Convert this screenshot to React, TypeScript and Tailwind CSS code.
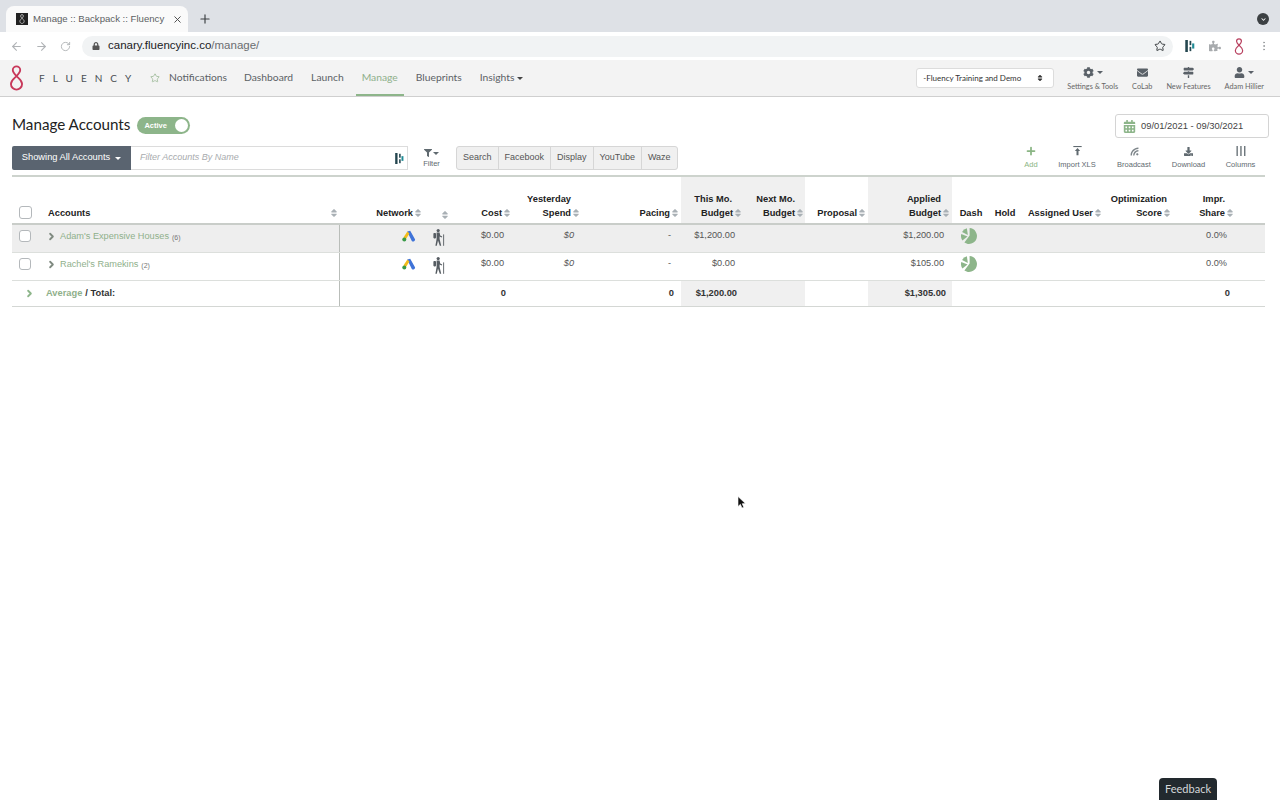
import { Star, Plus, X, ArrowLeft, ArrowRight, RotateCw, EllipsisVertical, ChevronRight } from "lucide-react";
import {
	FaLock,
	FaPuzzlePiece,
	FaCog,
	FaEnvelope,
	FaMapSigns,
	FaUser,
	FaFilter,
	FaRss,
	FaDownload,
	FaCalendarAlt,
	FaSort,
	FaChevronDown,
} from "react-icons/fa";
import type { ReactNode } from "react";

const GRID =
	"grid grid-cols-[28px_300px_85px_27px_62px_68px_99px_62px_62px_63px_84px_38px_30px_85px_70px_65px_25px]";

const FluencyMark = ({ className }: { className: string }) => (
	<svg viewBox="0 0 16 28" className={className} fill="none" stroke="currentColor" strokeWidth="2">
		<path d="M8 12 C5.5 9.5 4 7.5 4 5.5 C4 3 6 1.5 8 1.5 C10 1.5 12 3 12 5.5 C12 7.5 10.5 9.5 8 12 C5 15 2 16.5 2 20.5 C2 24 5 26.5 8 26.5 C11 26.5 14 24 14 20.5 C14 16.5 11 15 8 12 Z" />
	</svg>
);

const BarsMark = ({ className }: { className: string }) => (
	<svg viewBox="0 0 11 14" className={className}>
		<rect x="0" y="0" width="3" height="14" fill="#24464f" />
		<rect x="5" y="1" width="2" height="5" fill="#24464f" />
		<rect x="5" y="8" width="2" height="5" fill="#24464f" />
		<rect x="8" y="4" width="2.5" height="6" fill="#1f8a94" />
	</svg>
);

const AdsLogo = () => (
	<svg viewBox="0 0 14 12" className="h-[12px] w-[14px]">
		<path d="M5.2 1.6 L8.2 0.8 L13 9.2 A1.9 1.9 0 0 1 9.8 11 Z" fill="#3f73d8" />
		<path d="M5.4 1.4 L7.4 3.4 L4 9 L1.4 7.6 Z" fill="#f2bc1c" />
		<circle cx="2.3" cy="9.6" r="2" fill="#3a9a48" />
	</svg>
);

const HikerIcon = () => (
	<svg viewBox="0 0 12 17" className="h-[17px] w-[12px]" fill="#565c62">
		<circle cx="5.2" cy="1.6" r="1.6" />
		<rect x="0.4" y="4" width="2.6" height="5.4" rx="0.8" />
		<path d="M3.6 3.6 H6.6 L7.2 6.4 L9.2 7.4 L8.8 8.4 L6.6 7.6 V10 L8.2 16.8 H6.8 L5 11.4 L3.8 16.8 H2.4 L3.6 10 Z" />
		<rect x="10.2" y="5.4" width="0.9" height="11.4" />
	</svg>
);

const PieIcon = () => (
	<svg viewBox="0 0 16 16" className="h-[16px] w-[16px]" fill="#8db58a">
		<path d="M8.6 7.4 L8.6 0 A8 8 0 1 1 3.41 14.55 Z" />
		<path d="M6.5 8.5 L1.45 12.59 A8 8 0 0 1 0.27 5.93 Z" />
		<path d="M6.8 7 L1.07 4 A8 8 0 0 1 5.93 0.27 Z" />
	</svg>
);

const Caret = () => (
	<span className="inline-block h-0 w-0 border-x-[3px] border-t-[3px] border-x-transparent border-t-current" />
);

const Sort = () => <FaSort className="inline-block shrink-0 text-[10px] text-[#a9b0b5]" />;

const Head = ({
	children,
	top,
	sort = true,
	align = "justify-end",
	shade = false,
	pr = "pr-0",
	topPr = "pr-[10px]",
}: {
	children: ReactNode;
	top?: string;
	sort?: boolean;
	align?: string;
	shade?: boolean;
	pr?: string;
	topPr?: string;
}) => (
	<div
		className={`flex h-[46px] flex-col justify-end pb-[3px] text-right text-[9.3px] leading-[14px] font-bold whitespace-nowrap text-[#222] ${pr} ${shade ? "bg-[#f0f0f0]" : ""}`}
	>
		{top && <div className={topPr}>{top}</div>}
		<div className={`flex items-center ${align}`}>
			{children}
			{sort && <Sort />}
		</div>
	</div>
);

const ActionItem = ({ icon, label, green, width }: { icon: ReactNode; label: string; green?: boolean; width: string }) => (
	<div className={`flex flex-col items-center ${width} ${green ? "text-[#8ab584]" : "text-[#606a70]"}`}>
		<div className="flex h-[14px] items-center">{icon}</div>
		<span className="mt-[2px] text-[7.5px] leading-[10px] whitespace-nowrap">{label}</span>
	</div>
);

const NavTool = ({ icon, label, caret }: { icon: ReactNode; label: string; caret?: boolean }) => (
	<div className="flex flex-col items-center text-[#666]">
		<div className="flex h-[15px] items-center text-[11px] text-[#5a6168]">
			{icon}
			{caret && (
				<span className="ml-[3px] flex">
					<Caret />
				</span>
			)}
		</div>
		<span className="mt-[1px] text-[7.3px] leading-[11px] whitespace-nowrap">{label}</span>
	</div>
);

const AccountRow = ({
	name,
	count,
	gray,
	budget,
	applied,
}: {
	name: string;
	count: string;
	gray?: boolean;
	budget: string;
	applied: string;
}) => (
	<div className={`${GRID} h-[28px] border-b border-[#dcdfdc] text-[9.2px] text-[#555] ${gray ? "bg-[#eeeeee]" : "bg-white"}`}>
		<div className="flex items-start pt-[5px] pl-[7px]">
			<div className="h-[12px] w-[12px] rounded-[3px] border border-[#b4b8bb] bg-white" />
		</div>
		<div className="flex items-start border-r border-[#b9bdb9] pt-[5px] pl-[6px] text-[#8fb08b]">
			<ChevronRight className="mt-[1px] mr-[3px] h-[11px] w-[11px] text-[#7f8a80]" strokeWidth={4} />
			<span className="text-[9.2px] leading-[13px]">{name}</span>
			<span className="mt-[1px] ml-[3px] text-[7px] leading-[13px] text-[#777]">{count}</span>
		</div>
		<div className="flex justify-end pt-[5px] pr-[9px]">
			<AdsLogo />
		</div>
		<div className="flex justify-end pt-[4px] pr-[7px]">
			<HikerIcon />
		</div>
		<div className="pt-[4px] pr-[10px] text-right">$0.00</div>
		<div className="pt-[4px] pr-[8px] text-right italic">$0</div>
		<div className="pt-[4px] pr-[10px] text-right">-</div>
		<div className="pt-[4px] pr-[8px] text-right">{budget}</div>
		<div />
		<div />
		<div className="pt-[4px] pr-[8px] text-right">{applied}</div>
		<div className="pt-[3px] pl-[9px]">
			<PieIcon />
		</div>
		<div />
		<div />
		<div />
		<div className="pt-[4px] pr-[13px] text-right">0.0%</div>
		<div />
	</div>
);

const App = () => {
	return (
		<div className="relative h-[800px] w-[1280px] overflow-hidden bg-white font-['Liberation_Sans',sans-serif]">
			{/* Browser tab strip */}
			<div className="flex h-[32px] items-end bg-[#dee1e6] pl-[6px]">
				<div className="flex h-[26px] w-[182px] items-center rounded-t-[8px] bg-[#fafafa] pr-[5px] pl-[10px]">
					<div className="flex h-[12px] w-[12px] items-center justify-center bg-[#222]">
						<FluencyMark className="h-[10px] w-[6px] text-[#ddd]" />
					</div>
					<span className="ml-[5px] text-[9.6px] whitespace-nowrap text-[#5c5f63]">Manage :: Backpack :: Fluency</span>
					<X className="ml-auto h-[11px] w-[11px] text-[#444]" />
				</div>
				<Plus className="mb-[6px] ml-[10px] h-[14px] w-[14px] text-[#3c4043]" />
				<div className="mr-[11px] mb-[7px] ml-auto flex h-[12px] w-[12px] items-center justify-center rounded-full bg-[#3c4043]">
					<FaChevronDown className="text-[5px] text-white" />
				</div>
			</div>

			{/* Browser toolbar */}
			<div className="flex h-[28px] items-center bg-white pl-[10px]">
				<ArrowLeft className="h-[13px] w-[13px] text-[#b0b3b6]" />
				<ArrowRight className="ml-[12px] h-[13px] w-[13px] text-[#b0b3b6]" />
				<RotateCw className="ml-[12px] h-[11px] w-[11px] text-[#b0b3b6]" />
				<div className="ml-[11px] flex h-[21px] w-[1091px] items-center rounded-full bg-[#f1f3f4] pl-[10px]">
					<FaLock className="text-[8px] text-[#555]" />
					<span className="ml-[8px] text-[11.5px] text-[#202124]">
						canary.fluencyinc.co<span className="text-[#6a6d70]">/manage/</span>
					</span>
					<Star className="mr-[7px] ml-auto h-[12px] w-[12px] text-[#3c4043]" />
				</div>
				<BarsMark className="ml-[12px] h-[12px] w-[10px]" />
				<FaPuzzlePiece className="ml-[14px] text-[12px] text-[#a8abae]" />
				<FluencyMark className="ml-[13px] h-[17px] w-[10px] text-[#b8405f]" />
				<EllipsisVertical className="ml-[14px] h-[12px] w-[12px] text-[#9a9da0]" />
			</div>

			{/* App nav */}
			<div className="flex h-[37px] items-center border-b border-[#cfcfcf] bg-[#f3f3f3] font-['Lato',sans-serif]">
				<FluencyMark className="ml-[9px] h-[26px] w-[15px] text-[#c8385a]" />
				<span className="ml-[15px] w-[109px] text-[10px] tracking-[0.8em] whitespace-nowrap text-[#4a4f53]">FLUENCY</span>
				<Star className="ml-[2px] h-[10px] w-[10px] text-[#9dbb99]" />
				<nav className="flex h-full items-center text-[10.3px] text-[#5c6266]">
					<span className="ml-[9px]">Notifications</span>
					<span className="ml-[17px]">Dashboard</span>
					<span className="ml-[18px]">Launch</span>
					<span className="ml-[12px] flex h-full items-center border-b-2 border-[#8db58a] px-[6px] pt-[2px] text-[#8fb08b]">Manage</span>
					<span className="ml-[12px]">Blueprints</span>
					<span className="ml-[18px]">Insights</span>
					<span className="ml-[3px] flex text-[#444]">
						<Caret />
					</span>
				</nav>
				<div className="ml-auto flex h-[20px] w-[138px] items-center justify-between rounded-[3px] border border-[#dcdcdc] bg-white pr-[9px] pl-[6px] text-[8px] text-[#333]">
					-Fluency Training and Demo
					<FaSort className="text-[8px]" />
				</div>
				<div className="mr-[16px] ml-[13px] flex items-center gap-[14px]">
					<NavTool icon={<FaCog />} label="Settings & Tools" caret />
					<NavTool icon={<FaEnvelope />} label="CoLab" />
					<NavTool icon={<FaMapSigns />} label="New Features" />
					<NavTool icon={<FaUser />} label="Adam Hillier" caret />
				</div>
			</div>

			{/* Page header */}
			<div className="flex items-start justify-between pt-[17px] pr-[11px] pl-[12px]">
				<div className="flex items-center">
					<h1 className="-mt-[1px] mb-[2px] font-['Lato',sans-serif] text-[15.2px] leading-[22px] text-[#222]">Manage Accounts</h1>
					<div className="ml-[7px] flex h-[17px] w-[53px] items-center justify-between rounded-full bg-[#8db58a] pr-[2px] pl-[7px]">
						<span className="text-[7.5px] font-bold text-white">Active</span>
						<div className="h-[13px] w-[13px] rounded-full bg-white" />
					</div>
				</div>
				<div className="flex h-[24px] w-[154px] items-center rounded-[3px] border border-[#d4d4d4] pl-[7px] text-[9.4px] text-[#444]">
					<FaCalendarAlt className="text-[13px] text-[#8db58a]" />
					<span className="ml-[5px]">09/01/2021 - 09/30/2021</span>
				</div>
			</div>

			{/* Toolbar */}
			<div className="mt-[8px] flex h-[24px] items-center pr-[16px] pl-[12px]">
				<div className="flex h-full w-[119px] items-center justify-center rounded-l-[2px] bg-[#5a6470] text-[9.3px] text-white">
					Showing All Accounts
					<span className="ml-[5px] flex">
						<Caret />
					</span>
				</div>
				<div className="flex h-full w-[277px] items-center justify-between border border-l-0 border-[#dcdcdc] pr-[3px] pl-[9px] text-[9px] text-[#a8abae] italic">
					Filter Accounts By Name
					<BarsMark className="h-[11px] w-[9px]" />
				</div>
				<div className="ml-[15px] flex w-[17px] flex-col items-center text-[#606a70]">
					<div className="flex h-[12px] items-center text-[8px]">
						<FaFilter />
						<span className="ml-[1px] flex">
							<Caret />
						</span>
					</div>
					<span className="text-[7.5px] leading-[10px]">Filter</span>
				</div>
				<div className="ml-[16px] flex h-full items-stretch rounded-[3px] border border-[#d6d6d6] bg-[#f0f0f0] text-[9px] text-[#555]">
					{["Search", "Facebook", "Display", "YouTube", "Waze"].map((label, i) => (
						<span key={label} className={`flex items-center px-[6px] ${i > 0 ? "border-l border-[#d6d6d6]" : ""}`}>
							{label}
						</span>
					))}
				</div>
				<div className="-mt-[2px] ml-auto flex items-start">
					<ActionItem green width="w-[30px]" label="Add" icon={<Plus className="h-[12px] w-[12px]" strokeWidth={3.5} />} />
					<ActionItem
						width="w-[62px]"
						label="Import XLS"
						icon={
							<svg viewBox="0 0 10 12" className="h-[10px] w-[9px]" fill="currentColor">
								<rect x="0" y="0" width="10" height="1.3" />
								<path d="M5 2.5 L8.2 6 L6.2 6 L6.2 11 L3.8 11 L3.8 6 L1.8 6 Z" />
							</svg>
						}
					/>
					<ActionItem width="w-[52px]" label="Broadcast" icon={<FaRss className="scale-x-[-1] text-[9px] text-[#7d858a]" />} />
					<ActionItem width="w-[57px]" label="Download" icon={<FaDownload className="text-[9px]" />} />
					<ActionItem
						width="w-[47px]"
						label="Columns"
						icon={
							<svg viewBox="0 0 10 10" className="h-[10px] w-[10px]" fill="currentColor">
								<rect x="0.5" width="1.3" height="10" />
								<rect x="4.3" width="1.3" height="10" />
								<rect x="8.1" width="1.3" height="10" />
							</svg>
						}
					/>
				</div>
			</div>

			{/* Accounts table */}
			<div className="mx-[12px] mt-[5px] w-[1253px] border-t-2 border-[#cdd3cd]">
				<div className={`${GRID} border-b-2 border-[#c9cdc9]`}>
					<div className="flex items-end pb-[4px] pl-[7px]">
						<div className="h-[13px] w-[13px] rounded-[3px] border border-[#b4b8bb]" />
					</div>
					<Head align="justify-between" pr="pr-[1px]">
						<span className="pl-[8px]">Accounts</span>
					</Head>
					<Head pr="pr-[2px]">Network</Head>
					<Head pr="pr-[2px]"><span /></Head>
					<Head pr="pr-[2px]">Cost</Head>
					<Head pr="pr-[1px]" top="Yesterday">Spend</Head>
					<Head pr="pr-[1px]">Pacing</Head>
					<Head shade top="This Mo." topPr="pr-[11px]">Budget</Head>
					<Head shade top="Next Mo.">Budget</Head>
					<Head pr="pr-[1px]">Proposal</Head>
					<Head shade pr="pr-[1px]" top="Applied">Budget</Head>
					<Head sort={false} align="justify-center">Dash</Head>
					<Head sort={false} align="justify-center">Hold</Head>
					<Head pr="pr-[2px]">Assigned User</Head>
					<Head pr="pr-[3px]" top="Optimization" topPr="pr-[5px]">Score</Head>
					<Head pr="pr-[5px]" top="Impr.">Share</Head>
					<div />
				</div>
				<AccountRow gray name="Adam's Expensive Houses" count="(6)" budget="$1,200.00" applied="$1,200.00" />
				<AccountRow name="Rachel's Ramekins" count="(2)" budget="$0.00" applied="$105.00" />
				<div className={`${GRID} h-[26px] border-b border-[#d4d7d4] text-[9.3px] font-bold text-[#333]`}>
					<div className="flex items-center pl-[12px]">
						<ChevronRight className="h-[11px] w-[11px] text-[#8db58a]" strokeWidth={4} />
					</div>
					<div className="flex items-center border-r border-[#b9bdb9] pl-[6px]">
						<span className="text-[#8fb08b]">Average</span>
						<span className="ml-[3px]">/ Total:</span>
					</div>
					<div />
					<div />
					<div className="flex items-center justify-end pr-[8px]">0</div>
					<div />
					<div className="flex items-center justify-end pr-[7px]">0</div>
					<div className="flex items-center justify-end bg-[#f0f0f0] pr-[6px]">$1,200.00</div>
					<div className="bg-[#f0f0f0]" />
					<div />
					<div className="flex items-center justify-end bg-[#f0f0f0] pr-[6px]">$1,305.00</div>
					<div />
					<div />
					<div />
					<div />
					<div className="flex items-center justify-end pr-[10px]">0</div>
					<div />
				</div>
			</div>

			{/* Mouse pointer */}
			<svg viewBox="0 0 9 13" className="absolute top-[496px] left-[737px] h-[13px] w-[9px]">
				<path d="M1 0.5 L1 10.5 L3.4 8.3 L5 12 L6.8 11.2 L5.2 7.7 L8.4 7.5 Z" fill="#111" stroke="#fff" strokeWidth="0.6" />
			</svg>

			{/* Feedback tab */}
			<div className="absolute top-[778px] left-[1159px] flex h-[22px] w-[58px] items-center justify-center rounded-t-[4px] bg-[#22292e] font-['Lato',sans-serif] text-[11px] text-[#d5d8da]">
				Feedback
			</div>
		</div>
	);
};

export default App;
